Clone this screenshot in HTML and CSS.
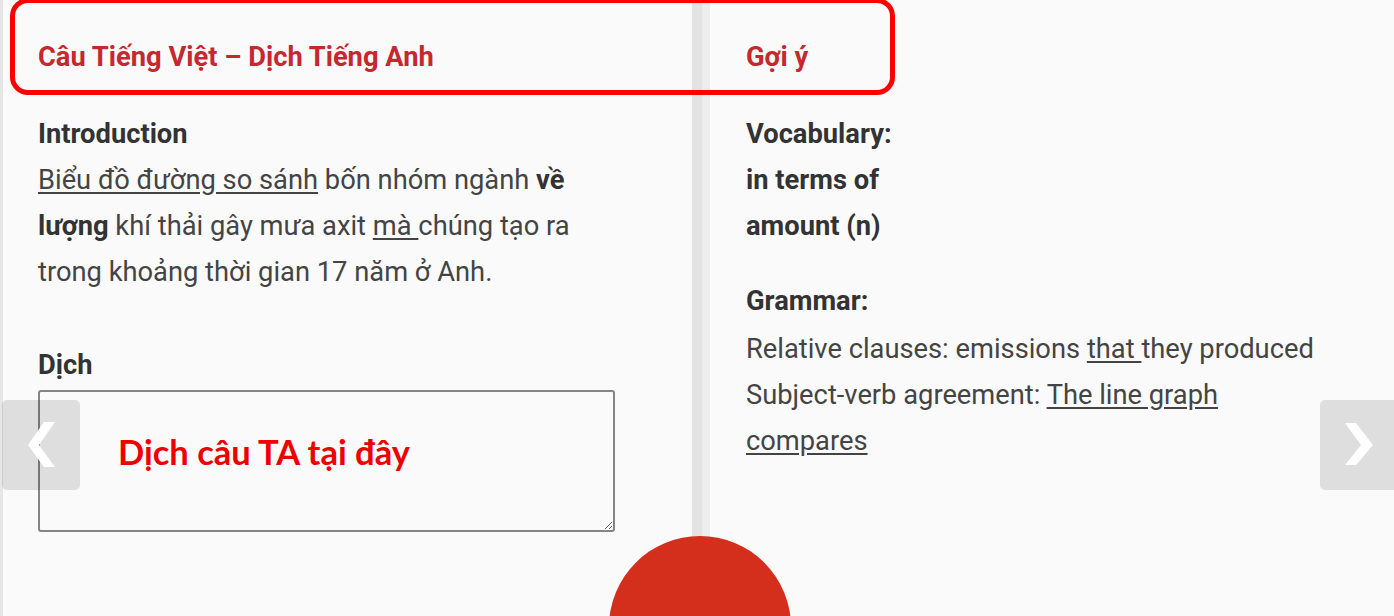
FILE: index.html
```html
<!DOCTYPE html>
<html lang="vi">
<head>
<meta charset="utf-8">
<title>Câu Tiếng Việt – Dịch Tiếng Anh</title>
<link rel="stylesheet" href="styles.css">
</head>
<body>
<div class="page">
  <section class="col col-left">
    <h2 class="title">Câu Tiếng Việt – Dịch Tiếng Anh</h2>
    <h3 class="label">Introduction</h3>
    <p class="text"><u>Biểu đồ đường so sánh</u> bốn nhóm ngành <b>về lượng</b> khí thải gây mưa axit <u>mà </u>chúng tạo ra trong khoảng thời gian 17 năm ở Anh.</p>
    <h3 class="label label-dich">Dịch</h3>
    <div class="answer">
      <textarea class="answer-box" aria-label="Dịch"></textarea>
      <span class="note">Dịch câu TA tại đây</span>
    </div>
  </section>
  <div class="divider"></div>
  <section class="col col-right">
    <h2 class="title">Gợi ý</h2>
    <div class="group">
      <h3 class="label">Vocabulary:</h3>
      <p class="label">in terms of</p>
      <p class="label">amount (n)</p>
    </div>
    <div class="group group-grammar">
      <h3 class="label">Grammar:</h3>
      <p class="text text-first">Relative clauses: emissions <u>that </u>they produced</p>
      <p class="text">Subject-verb agreement: <u>The line graph compares</u></p>
    </div>
  </section>

  <div class="highlight"></div>
  <button class="nav nav-prev" aria-label="Previous">
    <svg width="78" height="90" viewBox="0 0 78 90"><polygon points="42,22 53,22 37,45 53,67 42,67 26,45" fill="#ffffff"/></svg>
  </button>
  <button class="nav nav-next" aria-label="Next">
    <svg width="78" height="90" viewBox="0 0 78 90"><polygon points="25,23 36,23 53,45 36,65 25,65 41,45" fill="#ffffff"/></svg>
  </button>
  <div class="fab"></div>
</div>
</body>
</html>
```

FILE: styles.css
```css
html, body {
  margin: 0;
  padding: 0;
}

body {
  background: #fafafa;
  font-family: Roboto, "Noto Sans", sans-serif;
  overflow: hidden;
}

.page {
  position: relative;
  display: flex;
  height: 616px;
  overflow: hidden;
}

.col {
  box-sizing: border-box;
  padding-top: 34px;
}

.col-left {
  width: 692px;
  padding-left: 35px;
  border-left: 3px solid #e6e6e6;
}

.divider {
  width: 18px;
  flex: none;
  background: linear-gradient(to right, #e3e3e3 0, #e3e3e3 10px, #ededed 10px, #ededed 100%);
}

.col-right {
  flex: 1;
  padding-left: 36px;
}

.title {
  margin: 0 0 31px;
  font-size: 27.3px;
  line-height: 46px;
  font-weight: 700;
  color: #c5282f;
}

.label {
  margin: 0;
  font-size: 27.3px;
  line-height: 46px;
  font-weight: 700;
  color: #333333;
}

.text {
  margin: 0;
  font-size: 27.3px;
  line-height: 46px;
  color: #444444;
  max-width: 580px;
}

.text b {
  color: #333333;
}

.text u {
  text-underline-offset: 3px;
}

.label-dich {
  margin-top: 47px;
}

.answer {
  position: relative;
  width: 577px;
  height: 142px;
  margin-top: 2px;
}

.answer-box {
  box-sizing: border-box;
  display: block;
  width: 100%;
  height: 100%;
  border: 2px solid #858585;
  border-radius: 3px;
  background: #fafafa;
  margin: 0;
}

.note {
  position: absolute;
  left: 80px;
  top: 41px;
  font-family: Lato, "Liberation Sans", sans-serif;
  font-weight: 700;
  font-size: 34.5px;
  line-height: 42px;
  color: #ee0000;
  pointer-events: none;
  white-space: nowrap;
}

.group-grammar {
  margin-top: 29px;
}

.text-first {
  margin-top: 2px;
}

.highlight {
  position: absolute;
  left: 10px;
  top: -2px;
  width: 885px;
  height: 97px;
  box-sizing: border-box;
  border: 5px solid #ff0000;
  border-radius: 18px;
  pointer-events: none;
}

.nav {
  position: absolute;
  top: 400px;
  width: 78px;
  height: 90px;
  padding: 0;
  border: none;
  border-radius: 5px;
  background: rgba(0, 0, 0, 0.11);
}

.nav svg {
  display: block;
}

.nav-prev {
  left: 2px;
}

.nav-next {
  left: 1320px;
  width: 80px;
}

.fab {
  position: absolute;
  left: 609px;
  top: 536px;
  width: 182px;
  height: 182px;
  border-radius: 50%;
  background: #d32f1c;
}
```
